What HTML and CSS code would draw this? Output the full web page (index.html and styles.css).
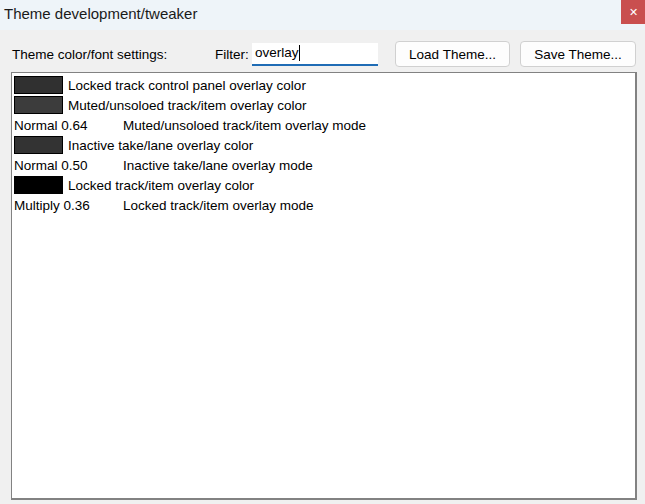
FILE: index.html
```html
<!DOCTYPE html>
<html>
<head>
<meta charset="utf-8">
<link rel="stylesheet" href="styles.css">
</head>
<body>
<div class="window">
  <div class="titlebar">
    <span class="title">Theme development/tweaker</span>
    <span class="close">&#x2715;</span>
  </div>
  <div class="toolbar">
    <span class="label">Theme color/font settings:</span>
    <span class="filter-label">Filter:</span>
    <div class="input"><span>overlay</span><span class="caret"></span></div>
    <button class="btn load">Load Theme...</button>
    <button class="btn save">Save Theme...</button>
  </div>
  <div class="list">
    <div class="row"><span class="swatch" style="background:#303030"></span><span class="name">Locked track control panel overlay color</span></div>
    <div class="row"><span class="swatch" style="background:#3c3c3c"></span><span class="name">Muted/unsoloed track/item overlay color</span></div>
    <div class="row"><span class="val">Normal 0.64</span><span class="name2">Muted/unsoloed track/item overlay mode</span></div>
    <div class="row"><span class="swatch" style="background:#333333"></span><span class="name">Inactive take/lane overlay color</span></div>
    <div class="row"><span class="val">Normal 0.50</span><span class="name2">Inactive take/lane overlay mode</span></div>
    <div class="row"><span class="swatch" style="background:#000000"></span><span class="name">Locked track/item overlay color</span></div>
    <div class="row"><span class="val">Multiply 0.36</span><span class="name2">Locked track/item overlay mode</span></div>
  </div>
</div>
</body>
</html>
```
FILE: styles.css
```css
html, body {
  margin: 0;
  padding: 0;
  background: #f0f0f0;
  font-family: "Liberation Sans", Arial, sans-serif;
  color: #000;
}
.window {
  width: 645px;
  height: 504px;
  display: flex;
  flex-direction: column;
}
.titlebar {
  height: 30px;
  background: #eef4f9;
  display: flex;
  align-items: flex-start;
  justify-content: space-between;
}
.title {
  font-size: 15px;
  padding: 5px 0 0 4px;
  color: #1a1a1a;
}
.close {
  width: 24px;
  height: 24px;
  background: #c94f4f;
  color: #fff;
  font-size: 11px;
  display: flex;
  align-items: center;
  justify-content: center;
}
.toolbar {
  height: 42px;
  display: flex;
  align-items: center;
  font-size: 13.5px;
  padding: 6px 0 0 12px;
  box-sizing: border-box;
}
.label {
  width: 203px;
}
.filter-label {
  width: 37px;
}
.input {
  width: 126px;
  height: 23px;
  box-sizing: border-box;
  background: #fff;
  border-bottom: 2px solid #1f6cb5;
  padding: 2px 0 0 3px;
  display: flex;
  align-items: flex-start;
  font-size: 13.5px;
  margin-right: 17px;
}
.caret {
  width: 1px;
  height: 16px;
  background: #000;
}
.btn {
  font-family: inherit;
  font-size: 13.5px;
  height: 26px;
  background: #fdfdfd;
  border: 1px solid #d0d0d0;
  border-radius: 4px;
  padding: 0;
  color: #000;
}
.load { width: 115px; margin-right: 10px; }
.save { width: 116px; }
.list {
  margin: 0 8px 4px 11px;
  flex: 1;
  background: #fff;
  border: 1px solid #828282;
  border-bottom-width: 2px;
  border-right-width: 2px;
  padding: 2px 0 0 2px;
  font-size: 13.5px;
}
.row {
  height: 20px;
  display: flex;
  align-items: center;
}
.swatch {
  width: 47px;
  height: 16px;
  border: 1px solid #000;
  margin-right: 5px;
}
.val {
  width: 109px;
}
```
